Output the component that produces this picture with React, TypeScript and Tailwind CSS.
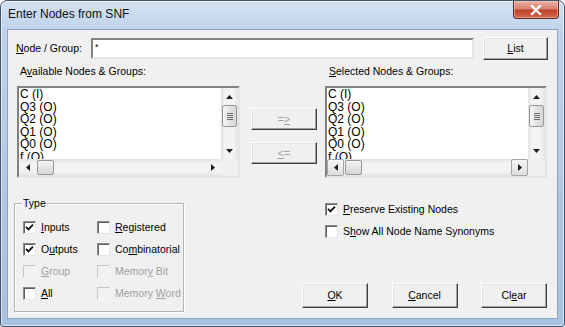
import React from "react";

const items = ["C (I)", "Q3 (O)", "Q2 (O)", "Q1 (O)", "Q0 (O)", "f (O)"];

function Btn({
  className = "",
  disabled = false,
  children,
}: {
  className?: string;
  disabled?: boolean;
  children: React.ReactNode;
}) {
  return (
    <div
      className={`flex items-center justify-center bg-[#f0f0f0] border border-t-white border-l-white border-b-[#404040] border-r-[#404040] shadow-[inset_-1px_-1px_0_#a0a0a0,inset_1px_1px_0_#e3e3e3] ${
        disabled ? "text-[#a0a0a0]" : "text-black"
      } ${className}`}
    >
      {children}
    </div>
  );
}

function Check({ checked = false, disabled = false }: { checked?: boolean; disabled?: boolean }) {
  return (
    <div
      className={`w-[13px] h-[13px] shrink-0 flex items-center justify-center border ${
        disabled
          ? "border-t-[#c6c6c6] border-l-[#c6c6c6] border-b-[#f6f6f6] border-r-[#f6f6f6] bg-[#f0f0f0]"
          : "border-t-[#8c8c8c] border-l-[#8c8c8c] border-b-[#e6e6e6] border-r-[#e6e6e6] bg-white shadow-[inset_1px_1px_0_#5f5f5f]"
      }`}
    >
      {checked && (
        <svg width="9" height="9" viewBox="0 0 9 9">
          <path d="M1 3.8 L3.4 6.3 L8 1.6" stroke="#111" strokeWidth="1.9" fill="none" />
        </svg>
      )}
    </div>
  );
}

function Tri({ dir }: { dir: "up" | "down" | "left" | "right" }) {
  const pts = {
    up: "0,4 7,4 3.5,0",
    down: "0,0 7,0 3.5,4",
    left: "4,0 4,7 0,3.5",
    right: "0,0 0,7 4,3.5",
  }[dir];
  const horiz = dir === "left" || dir === "right";
  return (
    <svg width={horiz ? 4 : 7} height={horiz ? 7 : 4} viewBox={horiz ? "0 0 4 7" : "0 0 7 4"}>
      <polygon points={pts} fill="#1e1e1e" />
    </svg>
  );
}

function VScroll() {
  return (
    <div className="flex flex-col bg-[linear-gradient(90deg,#e3e3e3,#f3f3f3_25%,#f3f3f3_75%,#e3e3e3)]">
      <div className="h-[17px] flex items-center justify-center">
        <Tri dir="up" />
      </div>
      <div className="h-[22px] mx-[1px] rounded-[2px] border border-[#979797] bg-[linear-gradient(90deg,#f6f6f6,#e4e4e4_50%,#d6d6d6)] flex flex-col items-center justify-center gap-[1px]">
        <div className="w-[6px] h-[1px] bg-[#6d6d6d]" />
        <div className="w-[6px] h-[1px] bg-[#6d6d6d]" />
        <div className="w-[6px] h-[1px] bg-[#6d6d6d]" />
        <div className="w-[6px] h-[1px] bg-[#6d6d6d]" />
      </div>
      <div className="flex-1" />
      <div className="h-[17px] flex items-center justify-center">
        <Tri dir="down" />
      </div>
    </div>
  );
}

function HScroll({ boxed = false }: { boxed?: boolean }) {
  const arrow = boxed
    ? "w-[17px] h-[17px] flex items-center justify-center border border-[#a5a5a5] rounded-[2px] bg-[linear-gradient(180deg,#f6f6f6,#dedede)]"
    : "w-[17px] h-[17px] flex items-center justify-center";
  return (
    <div className="flex items-center bg-[linear-gradient(180deg,#e3e3e3,#f3f3f3_25%,#f3f3f3_75%,#e3e3e3)]">
      <div className={arrow}>
        <Tri dir="left" />
      </div>
      <div className="w-[17px] h-[15px] ml-[1px] rounded-[2px] border border-[#979797] bg-[linear-gradient(180deg,#f6f6f6,#e4e4e4_50%,#d6d6d6)]" />
      <div className="flex-1" />
      <div className={arrow}>
        <Tri dir="right" />
      </div>
    </div>
  );
}

function ListBox({ className, boxed = false }: { className: string; boxed?: boolean }) {
  return (
    <div
      className={`${className} h-[92px] border-2 border-t-[#828282] border-l-[#828282] border-b-[#e6e6e6] border-r-[#e6e6e6] bg-white grid grid-cols-[1fr_17px] grid-rows-[1fr_17px]`}
    >
      <div className="overflow-hidden pl-[1px] text-[12px] leading-[12.6px]">
        {items.map((item) => (
          <div key={item}>{item}</div>
        ))}
      </div>
      <VScroll />
      <HScroll boxed={boxed} />
      <div className="bg-[#f0f0f0]" />
    </div>
  );
}

export default function App() {
  return (
    <div className="w-[565px] h-[327px] font-['Liberation_Sans',Arial,sans-serif] text-black">
      <div className="w-full h-full flex flex-col rounded-t-[7px] rounded-b-[3px] border border-[#42556d] bg-[linear-gradient(180deg,#d3e1f1_0%,#bfd2ea_10%,#b3c9e5_50%,#a8c1e0_100%)] shadow-[inset_0_0_0_1px_rgba(255,255,255,0.55)]">
        {/* Title bar */}
        <div className="h-[28px] flex items-start justify-between">
          <div className="pl-[7px] pt-[6px] text-[12px] leading-[14px] text-[#111]">Enter Nodes from SNF</div>
          <div className="mr-[5px] w-[46px] h-[18px] rounded-b-[4px] border border-t-0 border-[#5e2a22] bg-[linear-gradient(180deg,#e9b0a4_0%,#d98373_45%,#c2412b_55%,#cf6a4f_100%)] shadow-[inset_0_0_0_1px_rgba(255,220,210,0.45)] flex items-center justify-center">
            <svg width="12" height="10" viewBox="0 0 12 10">
              <path d="M2 1 L10 9 M10 1 L2 9" stroke="white" strokeWidth="2.4" strokeLinecap="square" />
            </svg>
          </div>
        </div>

        {/* Client area */}
        <div className="mx-[6px] mb-[7px] flex-1 border border-[#8ba4c3] bg-[#f0f0f0] flex flex-col text-[10.5px] leading-[13px] whitespace-nowrap">
          <div className="mt-[7px] h-[23px] flex items-center">
            <div className="w-[83px] pl-[8px]">
              <span className="underline underline-offset-1">N</span>ode / Group:
            </div>
            <div className="w-[383px] h-[21px] border-2 border-t-[#828282] border-l-[#828282] border-b-[#e6e6e6] border-r-[#e6e6e6] bg-white pl-[2px] pt-[1px] text-[9px]">
              *
            </div>
            <Btn className="ml-[9px] w-[65px] h-[23px]">
              <span className="underline underline-offset-1">L</span>ist
            </Btn>
          </div>

          <div className="mt-[5px] h-[13px] flex">
            <div className="w-[321px] pl-[12px]">
              A<span className="underline underline-offset-1">v</span>ailable Nodes &amp; Groups:
            </div>
            <div>
              <span className="underline underline-offset-1">S</span>elected Nodes &amp; Groups:
            </div>
          </div>

          <div className="mt-[8px] h-[92px] flex">
            <div className="ml-[9px]">
              <ListBox className="w-[223px]" />
            </div>
            <div className="ml-[11px] w-[66px] pt-[22px] flex flex-col gap-[12px]">
              <Btn disabled className="h-[22px]">
                =<span className="underline underline-offset-1">&gt;</span>
              </Btn>
              <Btn disabled className="h-[22px]">
                <span className="underline underline-offset-1">&lt;</span>=
              </Btn>
            </div>
            <div className="ml-[8px]">
              <ListBox className="w-[222px]" boxed />
            </div>
          </div>

          <div className="mt-[18px] flex">
            {/* Type group */}
            <div className="ml-[6px] mt-[7px] w-[170px] h-[109px] relative border border-[#b5b5b5] shadow-[inset_1px_1px_0_white,1px_1px_0_white]">
              <div className="absolute left-[7px] -top-[7px] px-[1px] bg-[#f0f0f0]">Type</div>
              <div className="pt-[12px] pl-[8px] grid grid-cols-[74px_1fr] auto-rows-[22px] items-center">
                <div className="flex items-center gap-[5px]">
                  <Check checked />
                  <span>
                    <span className="underline underline-offset-1">I</span>nputs
                  </span>
                </div>
                <div className="flex items-center gap-[5px]">
                  <Check />
                  <span>
                    <span className="underline underline-offset-1">R</span>egistered
                  </span>
                </div>
                <div className="flex items-center gap-[5px]">
                  <Check checked />
                  <span>
                    O<span className="underline underline-offset-1">u</span>tputs
                  </span>
                </div>
                <div className="flex items-center gap-[5px]">
                  <Check />
                  <span>
                    Co<span className="underline underline-offset-1">m</span>binatorial
                  </span>
                </div>
                <div className="flex items-center gap-[5px] text-[#a0a0a0]">
                  <Check disabled />
                  <span>
                    <span className="underline underline-offset-1">G</span>roup
                  </span>
                </div>
                <div className="flex items-center gap-[5px] text-[#a0a0a0]">
                  <Check disabled />
                  <span>
                    Memor<span className="underline underline-offset-1">y</span> Bit
                  </span>
                </div>
                <div className="flex items-center gap-[5px]">
                  <Check />
                  <span>
                    <span className="underline underline-offset-1">A</span>ll
                  </span>
                </div>
                <div className="flex items-center gap-[5px] text-[#a0a0a0]">
                  <Check disabled />
                  <span>
                    Memory <span className="underline underline-offset-1">W</span>ord
                  </span>
                </div>
              </div>
            </div>

            {/* Options and actions */}
            <div className="ml-[118px] w-[245px] pt-[2px] flex flex-col">
              <div className="h-[22px] pl-[23px] flex items-center gap-[5px]">
                <Check checked />
                <span>
                  <span className="underline underline-offset-1">P</span>reserve Existing Nodes
                </span>
              </div>
              <div className="h-[22px] pl-[23px] flex items-center gap-[5px]">
                <Check />
                <span>
                  S<span className="underline underline-offset-1">h</span>ow All Node Name Synonyms
                </span>
              </div>
              <div className="mt-[41px] flex justify-between">
                <Btn className="w-[66px] h-[25px]">
                  <span className="underline underline-offset-1">O</span>K
                </Btn>
                <Btn className="w-[66px] h-[25px]">
                  <span className="underline underline-offset-1">C</span>ancel
                </Btn>
                <Btn className="w-[66px] h-[25px]">
                  Cl<span className="underline underline-offset-1">e</span>ar
                </Btn>
              </div>
            </div>
          </div>
        </div>
      </div>
    </div>
  );
}
